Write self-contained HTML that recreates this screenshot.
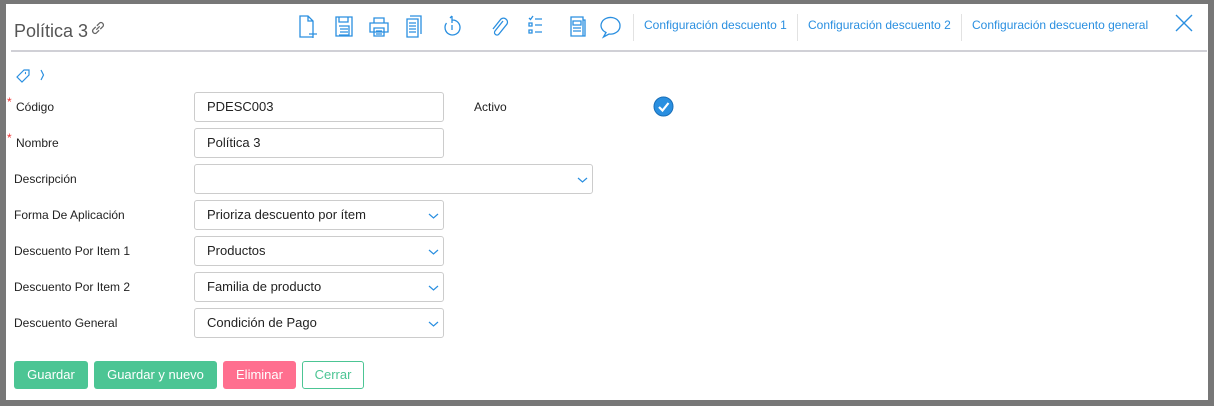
<!DOCTYPE html>
<html><head><meta charset="utf-8"><style>
body{margin:0;width:1214px;height:406px;background:#777;font-family:"Liberation Sans",sans-serif;overflow:hidden;position:relative}
.p{position:absolute;left:6px;top:4px;width:1202px;height:396px;background:#fff}
.a{position:absolute}
.t{position:absolute;left:8px;top:17px;font-size:18px;color:#555}
.hr{position:absolute;left:5px;top:46px;width:1196px;height:2px;background:#d0d0d6}
.lk{position:absolute;top:14px;font-size:12px;color:#2a8fe0}
.sep{position:absolute;top:10px;width:1px;height:27px;background:#e2e2e2}
.lb{position:absolute;left:8px;font-size:12px;color:#222}
.in{position:absolute;left:188px;width:250px;border:1px solid #ccc;border-radius:3px;font-size:13px;color:#222;line-height:28px;padding-left:12px;box-sizing:border-box;height:30px}
.ch{position:absolute;right:4px;top:11px}
.b{position:absolute;top:361px;height:28px;border-radius:3px;color:#fff;font-size:13px;line-height:28px;text-align:center}
svg{position:absolute}
</style></head><body><div class="p">
<div class="t">Política 3</div>
<svg style="left:83px;top:15px" width="18" height="18" viewBox="0 0 16 16" fill="none" stroke="#666" stroke-width="1.1"><path d="M6.5 9.5l3-3M6 7L3.5 9.5a2.2 2.2 0 003 3L9 10M10 9l2.5-2.5a2.2 2.2 0 00-3-3L7 6"/></svg>
<svg style="left:290px;top:10px" width="330" height="26" viewBox="0 0 330 26" fill="none" stroke="#2a8fe0" stroke-width="1.3">
<path d="M4 2h8l5 5v16H4z M12 2v5h5 M13 20h8 M17 16v8"/>
<path d="M40 3h16v19H40z M43 3v5h9V3 M43 12h10v9H43 M44 15h8M44 18h8"/>
<path d="M78 4h10v5H78z M74 9h18v9H74z M78 14h10v8H78z M80 17h6M80 20h6"/>
<path d="M111 5h11v18h-11z M114 2h11v18 M113 9h7M113 12h7M113 15h7M113 18h7"/>
<path d="M156 6a7.5 7.5 0 11-5.5 3 M156 2v7 M154 4l2-2 M156 11v5"/>
<path d="M207 7l-8 10a2.5 2.5 0 004 3l8-10a4 4 0 00-6-5l-8 10"/>
<path d="M233 9h3v3h-3z M233 16h3v3h-3z M239 5h7M239 11h7M239 18h7 M233 4l1.5 1.5L237 2"/>
<path d="M275 3h12v19h-12z M287 6h2v16h-14 M277 7h8v4h-8z M277 14h8M277 17h8"/>
<path d="M324 12a9.5 8 0 10-14 6.5l-2.5 4.5 5.5-3a9.5 8 0 0011-8z"/>
</svg>
<div class="sep" style="left:627px"></div>
<div class="lk" style="left:638px">Configuración descuento 1</div>
<div class="sep" style="left:791px"></div>
<div class="lk" style="left:802px">Configuración descuento 2</div>
<div class="sep" style="left:955px"></div>
<div class="lk" style="left:966px">Configuración descuento general</div>
<svg style="left:1169px;top:10px" width="18" height="18" fill="none" stroke="#2a8fe0" stroke-width="1.4"><path d="M1 1l16 16M17 1L1 17"/></svg>
<div class="hr"></div>
<svg style="left:9px;top:63px" width="36" height="18" fill="none" stroke="#2a8fe0" stroke-width="1.2"><path d="M2 10l7-7h5v5l-7 7z M11 5.5a.6.6 0 100 1.2"/><path d="M26 3l2.5 5-2.5 5"/></svg>
<span class="a" style="left:1px;top:91px;color:#e33;font-size:12px">*</span><div class="lb" style="top:96px;left:10px">Código</div>
<div class="in" style="top:88px">PDESC003</div>
<div class="lb" style="top:96px;left:468px">Activo</div>
<svg style="left:647px;top:92px" width="22" height="22"><circle cx="10.5" cy="10.5" r="9.5" fill="#2a8fe0" stroke="#1a6fb8"/><path d="M6 11l3.5 3.5L15.5 7" stroke="#fff" stroke-width="2.2" fill="none"/></svg>
<span class="a" style="left:1px;top:127px;color:#e33;font-size:12px">*</span><div class="lb" style="top:132px;left:10px">Nombre</div>
<div class="in" style="top:124px">Política 3</div>
<div class="lb" style="top:168px">Descripción</div>
<div class="in" style="top:160px;width:399px"><svg class="ch" width="11" height="8" fill="none" stroke="#2a8fe0" stroke-width="1.2"><path d="M1 2l4.5 4L10 2"/></svg></div>
<div class="lb" style="top:204px">Forma De Aplicación</div>
<div class="in" style="top:196px">Prioriza descuento por ítem<svg class="ch" width="11" height="8" fill="none" stroke="#2a8fe0" stroke-width="1.2"><path d="M1 2l4.5 4L10 2"/></svg></div>
<div class="lb" style="top:240px">Descuento Por Item 1</div>
<div class="in" style="top:232px">Productos<svg class="ch" width="11" height="8" fill="none" stroke="#2a8fe0" stroke-width="1.2"><path d="M1 2l4.5 4L10 2"/></svg></div>
<div class="lb" style="top:276px">Descuento Por Item 2</div>
<div class="in" style="top:268px">Familia de producto<svg class="ch" width="11" height="8" fill="none" stroke="#2a8fe0" stroke-width="1.2"><path d="M1 2l4.5 4L10 2"/></svg></div>
<div class="lb" style="top:312px">Descuento General</div>
<div class="in" style="top:304px">Condición de Pago<svg class="ch" width="11" height="8" fill="none" stroke="#2a8fe0" stroke-width="1.2"><path d="M1 2l4.5 4L10 2"/></svg></div>
</div>
<div class="b" style="left:14px;width:74px;background:#4cc594">Guardar</div>
<div class="b" style="left:94px;width:123px;background:#4cc594">Guardar y nuevo</div>
<div class="b" style="left:223px;width:73px;background:#ff6f8f">Eliminar</div>
<div class="b" style="left:302px;width:60px;height:26px;border:1px solid #4cc594;color:#4cc594;line-height:26px">Cerrar</div>
</body></html>
